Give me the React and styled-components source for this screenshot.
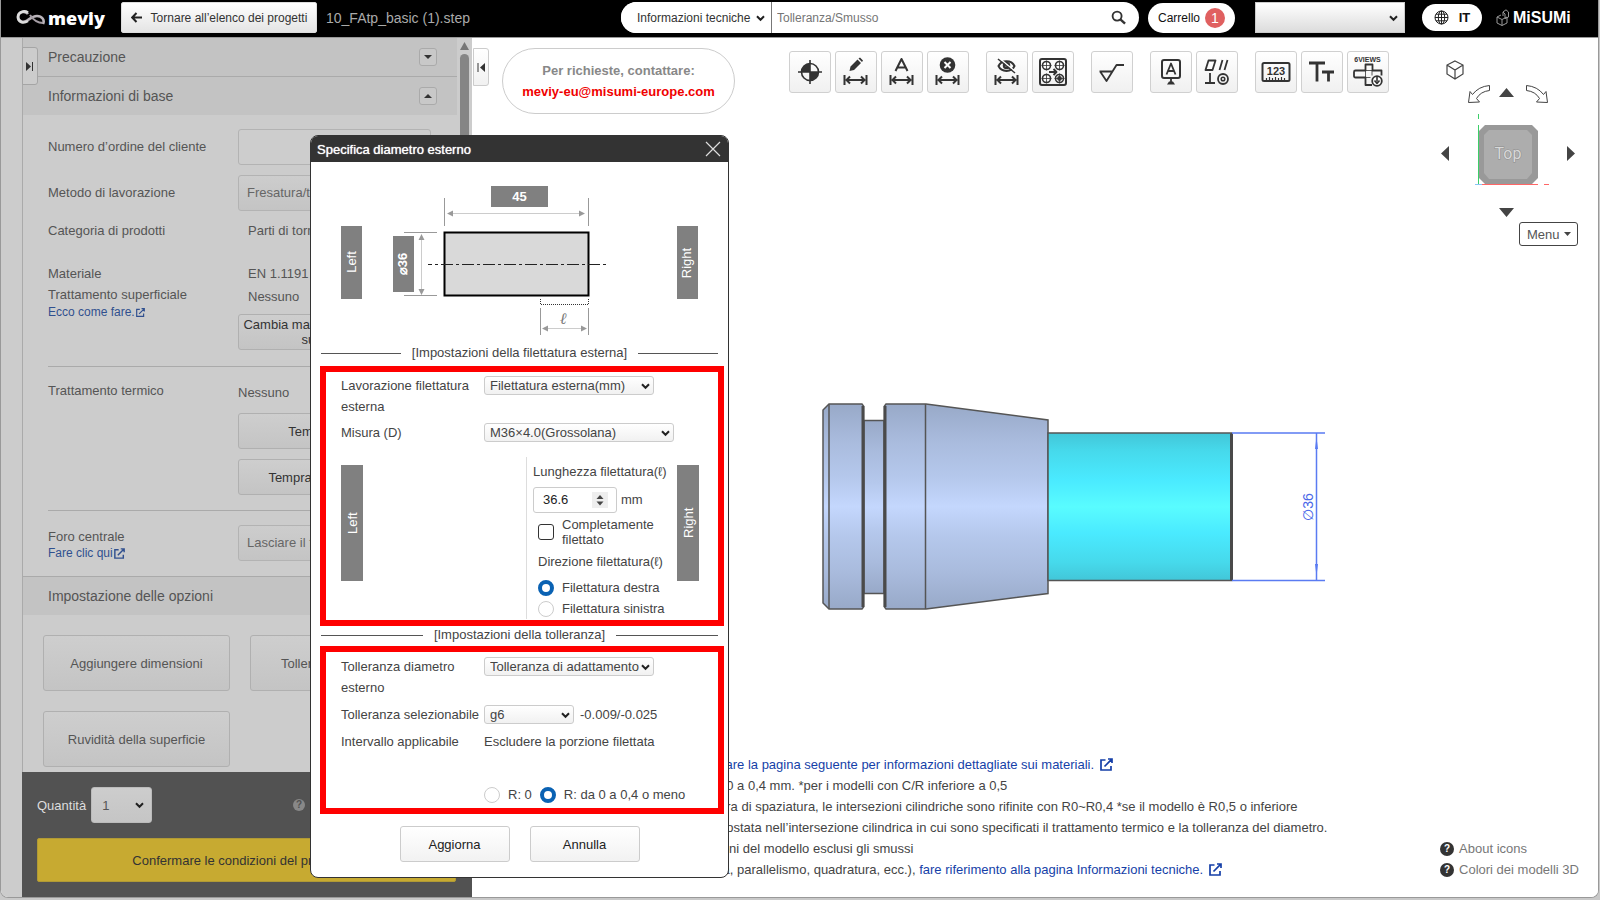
import React from 'react';
import styled, { createGlobalStyle, css } from 'styled-components';

const Global = createGlobalStyle`
  * { box-sizing: border-box; }
  body {
    margin: 0;
    background: #c9c9c9;
    color: #444;
    font-family: "Liberation Sans", Arial, sans-serif;
    font-size: 13px;
    overflow: hidden;
  }
  button, input, select { font: inherit; color: inherit; margin: 0; }
  a { text-decoration: none; }
`;

/* ---------- frame ---------- */

const Shell = styled.div`
  position: relative;
  display: flex;
  flex-direction: column;
  height: calc(100vh - 2px);
  margin-right: 1px;
  border: 1px solid #999;
  border-top: 0;
  border-radius: 0 0 8px 8px;
  background: #fff;
  overflow: hidden;
`;

const Header = styled.header`
  display: flex;
  align-items: center;
  flex: none;
  height: 38px;
  padding: 0 27px 2px 15px;
  background: #000;
  border-bottom: 1px solid #999;
  font-size: 12px;
`;

const Brand = styled.a`
  display: flex;
  align-items: center;
  gap: 2px;
  width: 105px;
  color: #fff;
  font: 800 18px/30px "Open Sans", sans-serif;
  svg { flex: none; }
`;

const BackButton = styled.button`
  display: flex;
  align-items: center;
  justify-content: center;
  gap: 9px;
  width: 196px;
  height: 31px;
  padding: 0;
  border: 1px solid #ddd;
  border-radius: 2px;
  background: linear-gradient(#fff, #e4e4e4);
  color: #333;
  white-space: nowrap;
`;

const FileName = styled.span`
  width: 304px;
  padding-left: 9px;
  color: #aaa;
  font-size: 14px;
`;

const Search = styled.form`
  display: flex;
  align-items: center;
  flex: 1;
  height: 31px;
  padding-right: 13px;
  border-radius: 16px;
  background: #fff;
  overflow: hidden;
`;

const SearchInput = styled.input`
  flex: 1;
  min-width: 0;
  height: 31px;
  padding: 0 5px;
  border: 0;
  border-left: 1px solid #777;
  background: none;
  color: #333;
  &::placeholder { color: #757575; }
`;

const IconButton = styled.button`
  display: flex;
  padding: 0;
  border: 0;
  background: none;
`;

const HeaderPill = styled.button`
  display: flex;
  align-items: center;
  justify-content: center;
  gap: ${p => p.$gap}px;
  width: ${p => p.$width}px;
  height: ${p => p.$height}px;
  margin-left: ${p => p.$left}px;
  padding: 0;
  border: 0;
  border-radius: 16px;
  background: #fff;
  color: #111;
  font-size: ${p => (p.$bold ? 13 : 12)}px;
  font-weight: ${p => (p.$bold ? 700 : 400)};
`;

const Badge = styled.span`
  width: 20px;
  height: 20px;
  border-radius: 50%;
  background: #e06060;
  color: #fff;
  font: 14px/20px "Liberation Sans", Arial, sans-serif;
`;

const Misumi = styled.a`
  display: flex;
  align-items: center;
  gap: 4px;
  width: 75px;
  margin-left: 14px;
  color: #fff;
  font: 700 16px/30px "Liberation Sans", sans-serif;
  svg { flex: none; }
`;

/* ---------- select ---------- */

const selectLooks = {
  header: css`border: 0; background: #fff; height: 31px; padding: 0 16px; color: #333;`,
  account: css`border: 1px solid #ccc; background: linear-gradient(#fff, #dcdcdc); height: 31px;`,
  panel: css`border: 1px solid #b3b3b3; border-radius: 3px; background: linear-gradient(#cdcdcd, #c4c4c4); height: 36px; padding: 0 8px; color: #666;`,
  quantity: css`border: 1px solid #bbb; border-radius: 3px; background: linear-gradient(#cdcdcd, #c5c5c5); height: 36px; padding: 0 10px; color: #555;`,
  dialog: css`border: 1px solid #ccc; border-radius: 3px; background: linear-gradient(#fff, #f1f1f1); height: 19px; padding: 0 5px; line-height: 17px; color: #444;`,
};

const SelectWrap = styled.span`
  position: relative;
  display: block;
  flex: none;
  width: ${p => p.$width}px;
  margin-left: ${p => p.$left || 0}px;
  svg {
    position: absolute;
    top: 50%;
    right: ${p => p.$arrow}px;
    margin-top: -3px;
    pointer-events: none;
  }
`;

const SelectField = styled.select`
  display: block;
  width: 100%;
  appearance: none;
  ${p => selectLooks[p.$look]}
`;

function Select({ look, width, left, arrow = 4, options, ...rest }) {
  return (
    <SelectWrap $width={width} $left={left} $arrow={arrow}>
      <SelectField $look={look} {...rest}>
        {options.map(o => <option key={o}>{o}</option>)}
      </SelectField>
      <svg width="9" height="7" viewBox="0 0 9 7" fill="none" stroke="#222" strokeWidth="2">
        <path d="M1 1.2 4.5 4.8 8 1.2" />
      </svg>
    </SelectWrap>
  );
}

/* ---------- left panel ---------- */

const Main = styled.div`
  display: flex;
  flex: 1;
  min-height: 0;
`;

const Rail = styled.div`
  flex: none;
  width: 21px;
  background: #ccc;
`;

const Panel = styled.aside`
  position: relative;
  display: flex;
  flex-direction: column;
  flex: none;
  width: 450px;
  background: #ccc;
`;

const PanelScroll = styled.div`
  display: flex;
  flex: 1;
  min-height: 0;
  overflow: hidden;
  border-left: 1px solid #aaa;
`;

const PanelContent = styled.div`
  flex: 1;
`;

const ScrollTrack = styled.div`
  display: flex;
  flex-direction: column;
  align-items: center;
  gap: 4px;
  width: 16px;
  padding: 4px 0 0;
  svg { flex: none; }
`;

const ScrollThumb = styled.div`
  width: 9px;
  height: 600px;
  border-radius: 5px;
  background: #858585;
`;

const SectionHeader = styled.h2`
  display: flex;
  align-items: center;
  justify-content: space-between;
  height: ${p => (p.$line ? 39 : 38)}px;
  margin: 0;
  padding: 0 20px 0 25px;
  border-top: ${p => (p.$line ? '1px solid #aaa' : '0')};
  background: #c3c3c3;
  color: #555;
  font-size: 14px;
  font-weight: 400;
`;

const Toggle = styled.button`
  display: grid;
  place-items: center;
  width: 18px;
  height: 18px;
  padding: 0;
  border: 1px solid #aaa;
  border-radius: 3px;
  background: #c8c8c8;
`;

const EdgeTab = styled.button`
  position: absolute;
  top: ${p => (p.$dim ? 9 : 10)}px;
  left: ${p => p.$left}px;
  display: grid;
  place-items: center;
  width: 16px;
  height: 38px;
  padding: 0;
  border: 1px solid ${p => (p.$dim ? '#a5a5a5' : '#ccc')};
  border-radius: 0 3px 3px 0;
  background: ${p => (p.$dim ? '#ccc' : 'linear-gradient(#fff, #f1f1f1)')};
`;

const Form = styled.div`
  padding: 14px 25px 15px 25px;
  color: #555;
`;

const Field = styled.div`
  display: grid;
  grid-template-columns: 190px 193px;
  min-height: ${p => p.$height || 20}px;
  margin-bottom: ${p => p.$gap || 0}px;
  align-items: ${p => (p.$middle ? 'center' : 'start')};
  line-height: 20px;
`;

const Stack = styled.div`
  display: flex;
  flex-direction: column;
  gap: ${p => p.$gap || 0}px;
  padding-top: ${p => p.$top || 0}px;
`;

const Indented = styled.span`
  padding-left: 10px;
`;

const Rule = styled.hr`
  width: 100%;
  margin: 0 0 14px;
  border: 0;
  border-top: 1px solid #aaa;
`;

const HelpLink = styled.a`
  display: flex;
  align-items: center;
  gap: 1px;
  color: #30508f;
  font-size: 12px;
  line-height: 12px;
`;

const OrderInput = styled.input`
  width: 100%;
  height: 36px;
  border: 1px solid #b3b3b3;
  border-radius: 3px;
  background: #cdcdcd;
`;

const PanelButton = styled.button`
  width: 100%;
  height: ${p => p.$height || 36}px;
  padding: 0;
  border: 1px solid #b0b0b0;
  border-radius: 3px;
  background: linear-gradient(#cecece, #c4c4c4);
  color: ${p => (p.$soft ? '#555' : '#333')};
  line-height: 15px;
`;

const OptionGrid = styled.div`
  display: grid;
  grid-template-columns: 187px 187px;
  gap: 20px;
  padding: 20px;
`;

const PanelFooter = styled.footer`
  flex: none;
  height: 125px;
  padding: 15px 16px 0 15px;
  background: #525252;
  color: #ddd;
`;

const QuantityRow = styled.div`
  display: flex;
  align-items: center;
  gap: 5px;
  margin-bottom: 15px;
`;

const HelpDot = styled.span`
  width: ${p => p.$size || 12}px;
  height: ${p => p.$size || 12}px;
  margin-left: ${p => p.$left || 0}px;
  border-radius: 50%;
  background: ${p => p.$bg};
  color: ${p => p.$fg};
  font-size: 10px;
  font-weight: 700;
  line-height: ${p => p.$size || 12}px;
  text-align: center;
`;

const Confirm = styled.button`
  width: 100%;
  height: 44px;
  border: 1px solid #b09a35;
  border-radius: 2px;
  background: #c7aa31;
  color: #333;
`;

/* ---------- viewer ---------- */

const Viewer = styled.main`
  position: relative;
  display: flex;
  flex-direction: column;
  flex: 1;
  min-width: 0;
  background: #fff;
`;

const TopRow = styled.div`
  display: flex;
  align-items: flex-start;
  padding: 10px 0 0 30px;
`;

const Contact = styled.address`
  display: flex;
  flex-direction: column;
  align-items: center;
  justify-content: center;
  width: 233px;
  height: 66px;
  border: 1px solid #ccc;
  border-radius: 33px;
  color: #888;
  font-style: normal;
  font-weight: 700;
  line-height: 21px;
  a { color: #f00000; }
`;

const Toolbar = styled.div`
  display: flex;
  gap: 17px;
  margin: 3px 0 0 54px;
`;

const ToolGroup = styled.div`
  display: flex;
  gap: 4px;
`;

const Tool = styled.button`
  width: 42px;
  height: 42px;
  padding: 0;
  border: 1px solid #d0d0d0;
  border-radius: 3px;
  background: linear-gradient(#fff, #f0f0f0);
  svg { display: block; }
`;

const Stage = styled.div`
  flex: 1;
  min-height: 0;
  padding: 289px 0 0 350px;
  svg { display: block; }
`;

const Navigator = styled.div`
  position: absolute;
  top: 19px;
  right: 18px;
  display: flex;
  flex-direction: column;
  align-items: flex-end;
`;

const MenuButton = styled.button`
  display: flex;
  align-items: center;
  justify-content: space-between;
  width: 59px;
  height: 24px;
  margin-right: 2px;
  padding: 0 6px 0 7px;
  border: 1px solid #444;
  border-radius: 3px;
  background: #fff;
  color: #555;
`;

const BottomRow = styled.div`
  display: flex;
  align-items: flex-end;
  justify-content: space-between;
  padding: 0 19px 17px 247px;
  line-height: 21px;
`;

const Notes = styled.ul`
  margin: 0;
  padding: 0;
  list-style: none;
  white-space: nowrap;
  a { color: #153fa8; }
  svg { margin-left: 6px; vertical-align: -2px; }
`;

const Legend = styled.div`
  display: flex;
  flex-direction: column;
  a { display: flex; align-items: center; gap: 5px; color: #777; }
`;

/* ---------- dialog ---------- */

const Dialog = styled.section`
  position: absolute;
  top: 135px;
  left: 309px;
  width: 419px;
  padding-bottom: 15px;
  border: 1px solid #333;
  border-radius: 8px;
  background: #fff;
  overflow: hidden;
`;

const DialogHeader = styled.header`
  display: flex;
  align-items: center;
  justify-content: space-between;
  height: 26px;
  padding: 0 7px 0 6px;
  background: #333;
  color: #fff;
  h1 {
    margin: 0;
    font-size: 13px;
    font-weight: 400;
    text-shadow: 0 0 1px #fff;
  }
`;

const DialogBody = styled.div`
  padding: 0 4px 0 9px;
  line-height: 21px;
`;

const Sketch = styled.svg`
  display: block;
  margin: 22px 0 7px 21px;
`;

const GroupTitle = styled.h2`
  display: flex;
  align-items: center;
  gap: 11px;
  height: 18px;
  margin: 0 6px 2px 1px;
  font-size: 13px;
  font-weight: 400;
  line-height: 18px;
  &::before, &::after { content: ""; flex: 1; border-top: 1px solid #555; }
`;

const RedFrame = styled.div`
  height: ${p => p.$height}px;
  margin-top: ${p => p.$top || 0}px;
  padding: ${p => p.$pad}px 13px 0 15px;
  border: 6px solid #f00;
`;

const Row = styled.div`
  display: grid;
  grid-template-columns: 143px 1fr;
  margin-bottom: ${p => p.$gap || 0}px;
`;

const Inline = styled.div`
  display: flex;
  align-items: center;
  gap: ${p => p.$gap || 6}px;
  height: ${p => p.$height || 21}px;
`;

const ThreadArea = styled.div`
  display: flex;
  margin-top: 14px;
`;

const SideLabel = styled.div`
  display: grid;
  place-items: center;
  flex: none;
  width: 22px;
  height: 116px;
  margin-top: 8px;
  background: #808080;
  color: #fff;
  writing-mode: vertical-rl;
  transform: rotate(180deg);
`;

const ThreadForm = styled.div`
  flex: none;
  width: 151px;
  height: 162px;
  margin-left: 163px;
  padding: 4px 0 0 6px;
  border-left: 1px solid #ddd;
  white-space: nowrap;
`;

const LengthBox = styled.span`
  display: flex;
  align-items: center;
  width: 84px;
  height: 26px;
  padding: 0 8px 0 9px;
  border: 1px solid #ccc;
  border-radius: 3px;
  color: #222;
  input { width: 49px; padding: 0; border: 0; background: none; }
`;

const Spinner = styled.svg`
  background: #eee;
`;

const Choice = styled.label`
  display: flex;
  align-items: center;
  gap: 8px;
  padding-left: ${p => p.$indent || 0}px;
  line-height: ${p => p.$line || 21}px;
`;

const Check = styled.input`
  appearance: none;
  width: 16px;
  height: 16px;
  margin: 0;
  border: 1px solid #333;
  border-radius: 3px;
  background: #fff;
`;

const Radio = styled.input`
  appearance: none;
  flex: none;
  width: 16px;
  height: 16px;
  margin: 0;
  border: 1px solid #ccc;
  border-radius: 50%;
  background: #fff;
  &:checked { border: 4px solid #0a62b3; }
`;

const RadioRow = styled.div`
  display: flex;
  gap: 8px;
  padding: 32px 0 0 143px;
`;

const Actions = styled.div`
  display: flex;
  justify-content: center;
  gap: 20px;
  margin: 12px 5px 0 0;
`;

const ActionButton = styled.button`
  width: 110px;
  height: 36px;
  border: 1px solid #ccc;
  border-radius: 3px;
  background: linear-gradient(#fff, #f2f2f2);
  color: #222;
`;

/* ---------- drawings ---------- */

const ExternalIcon = ({ size = 13, color = '#153fa8' }) => (
  <svg width={size} height={size} viewBox="0 0 13 13" fill="none" stroke={color} strokeWidth="1.7">
    <path d="M5.5 2H1v10h10V8M4.5 8.5 11.8 1.2M8 1h4v4" />
  </svg>
);

const DimArrow = () => (
  <path d="M9.5 24v10M31.5 24v10M11.5 29h18M15 25.5 11.5 29l3.5 3.5M26 25.5l3.5 3.5-3.5 3.5" />
);

const ToolIcon = ({ children }) => (
  <svg width="40" height="40" viewBox="1 1 40 40" fill="none" stroke="#333" strokeWidth="2" strokeLinejoin="round">
    {children}
  </svg>
);

const Hole = ({ x, y, full }) => (
  <g strokeWidth="1.2">
    <circle cx={x} cy={y} r="4" strokeWidth="1.6" />
    <path d={`M${x - 5} ${y}h10M${x} ${y - 5}v10`} strokeWidth="0.8" />
    {full && <circle cx={x} cy={y} r="1.8" fill="#333" />}
  </g>
);

const toolGroups = [
  [
    ['Origine', <>
      <circle cx="21" cy="21" r="8.5" strokeWidth="1.6" />
      <path d="M21 21V12.500A8.500 8.500 0 0 0 12.500 21zM21 21v8.500A8.500 8.500 0 0 0 29.500 21z" fill="#333" stroke="none" />
      <path d="M21 9v24M9 21h24" strokeWidth="1.6" />
    </>],
    ['Modifica quota', <>
      <DimArrow />
      <path d="M14.500 20l1-4.500 7-7 3.500 3.500-7 7zM23.500 7.500l1.500-1 3 3-1 1.500z" fill="#333" stroke="none" />
    </>],
    ['Quota automatica', <><DimArrow /><path d="M14.500 20 20.500 8l6 12M16.500 16.500h8" /></>],
    ['Elimina quota', <>
      <DimArrow />
      <circle cx="20.500" cy="14" r="7.800" fill="#333" stroke="none" />
      <path d="M17.500 11l6 6M23.500 11l-6 6" stroke="#fff" />
    </>],
  ],
  [
    ['Nascondi quote', <>
      <DimArrow />
      <path d="M12.500 15c3-6.500 13-6.500 16 0-3 6.500-13 6.500-16 0z" />
      <circle cx="20.500" cy="14.500" r="2.500" strokeWidth="2.500" />
      <path d="M13 7l17 14" stroke="#fff" strokeWidth="1.500" />
      <path d="M12 8l17 14" strokeWidth="1.500" />
    </>],
    ['Gruppo fori', <>
      <rect x="8" y="8" width="26" height="26" rx="2" />
      <Hole x={14.5} y={14.5} /><Hole x={27.5} y={14.5} /><Hole x={14.5} y={27.5} /><Hole x={27.5} y={27.5} full />
      <path d="M17 21h7M21.500 18l3 3-3 3" strokeWidth="1.800" />
    </>],
  ],
  [['Rugosità', <path key="r" d="M8.500 20.500h13M9.500 21l6 9L25.500 14H33" strokeWidth="1.800" />]],
  [
    ['Riferimento', <>
      <rect x="12" y="9" width="18" height="18" rx="2" />
      <path d="M16.500 23.500 21 12.500l4.500 11M18 20h6M21 27v4" strokeWidth="1.800" />
      <path d="M17 33.500h8l-2-3h-4z" fill="#333" stroke="none" />
    </>],
    ['Tolleranza geometrica', <>
      <path d="M9.500 19 12.500 9.500h7L16.500 19zM23.500 19l3-10M28.500 19l3-10M14 22v10M9 32h10" strokeWidth="1.800" />
      <circle cx="27" cy="28" r="5" strokeWidth="1.800" /><circle cx="27" cy="28" r="1.800" strokeWidth="1.500" />
    </>],
  ],
  [
    ['Misura', <>
      <rect x="7.500" y="12" width="27" height="18" rx="1.500" />
      <path d="M11.500 30v-3M14.500 30v-4M17.500 30v-3M20.500 30v-4M23.500 30v-3M26.500 30v-4M29.500 30v-3" strokeWidth="1.200" />
      <text x="21" y="24" fill="#333" stroke="none" fontSize="11" fontWeight="700" textAnchor="middle">123</text>
    </>],
    ['Testo', <path key="t" d="M8 12h16M16 12v18.500M21 21h12M27.500 21v9.500" strokeWidth="2.800" />],
    ['Sei viste', <>
      <text x="20.500" y="11" fill="#333" stroke="none" fontSize="7" fontWeight="700" textAnchor="middle">6VIEWS</text>
      <path d="M25 34h-6.500v-7.500h-10q-1.500 0-1.500-1.500v-4q0-1.500 1.500-1.500h10v-6h7v6h9v5" strokeWidth="1.800" />
      <path d="M18.500 19.500h7M18.500 26.500h5M18.500 19.500v7M25 19.500v5" strokeWidth="0.800" />
      <circle cx="30" cy="30" r="4.800" fill="#fff" strokeWidth="1.800" />
      <path d="M30 25.500v5M27.500 29.500l2.500 3 2.500-3" strokeWidth="1.600" />
    </>],
  ],
];

const NavDrawing = () => (
  <svg width="140" height="165" viewBox="1440 57 140 165" fill="none" stroke="#444">
    <path d="M1455 61l8 4v9l-8 5-8-5v-9zM1447 65l8 5 8-5M1455 70v9" strokeWidth="1.200" />
    <path d="M1489.500 85.500v5q-9 1-13 8l3 3.500-11 .500 1.500-11 2.500 3q6-8 17-9zM1526.500 85.500v5q9 1 13 8l-3 3.500 11 .500-1.500-11-2.500 3q-6-8-17-9z" />
    <path d="M1499 97l7.500-9 7.500 9zM1499 208l7.500 9 7.500-9zM1449 146l-8 7.500 8 7.500zM1567 146l8 7.500-8 7.500z" fill="#444" stroke="none" />
    <path d="M1485 125h47l6 6v47l-6 6h-47l-6-6v-47z" fill="#999" stroke="none" />
    <path d="M1489 130h38l5 5v38l-5 6h-38l-5-6v-38z" fill="#adadad" stroke="none" />
    <text x="1508" y="159" fill="#d8d8d8" stroke="#8c8c8c" strokeWidth="1" paintOrder="stroke" fontSize="16" fontFamily="Roboto, sans-serif" textAnchor="middle">Top</text>
    <path d="M1478.500 125v59M1478.500 114v5" stroke="#3ccf68" />
    <path d="M1482 184.500h56M1544 184.500h5" stroke="#f66" />
    <path d="M1475 184.500h7" stroke="#8bc4f5" />
  </svg>
);

const Model = () => (
  <svg width="510" height="208" viewBox="822 403 510 208">
    <defs>
      <linearGradient id="steel" x1="0" y1="0" x2="0" y2="1">
        <stop offset="0" stopColor="#98a9c8" /><stop offset=".18" stopColor="#a9bbdd" />
        <stop offset=".36" stopColor="#b5c8ec" /><stop offset=".5" stopColor="#c4d7fd" />
        <stop offset=".64" stopColor="#b5c8ec" /><stop offset=".82" stopColor="#a9bbdd" />
        <stop offset="1" stopColor="#98a9c8" />
      </linearGradient>
      <linearGradient id="thread" x1="0" y1="0" x2="0" y2="1">
        <stop offset="0" stopColor="#42c6d8" /><stop offset=".12" stopColor="#46d9eb" />
        <stop offset=".32" stopColor="#4aeaff" /><stop offset=".5" stopColor="#59fcff" />
        <stop offset=".68" stopColor="#4aeaff" /><stop offset=".88" stopColor="#46d9eb" />
        <stop offset="1" stopColor="#42c6d8" />
      </linearGradient>
    </defs>
    <g stroke="#555" strokeWidth="1.500" fill="url(#steel)">
      <path d="M864 420.500h20v173h-20z" />
      <path d="M829 404h33l1.500 2v201l-1.500 2h-33l-6-6V410z" />
      <path d="M886 404h40l122 16v173.500L926 609h-40l-1.500-2V406z" />
      <path d="M1048 433h183.500v147.500H1048z" fill="url(#thread)" />
      <path d="M829 404v205M925.500 404v205" fill="none" />
      <path d="M863 406v201M885 406v201M1231.500 433.500v147" strokeWidth="3" stroke="#4a4a4a" />
    </g>
    <g stroke="#5a7bf2" strokeWidth="1.500" fill="none">
      <path d="M1232 433h93M1232 580.500h93M1316.500 433v147" />
      <path d="M1315 449l1.500-12 1.500 12zM1315 564l1.500 12 1.500-12z" fill="#5a7bf2" stroke="none" />
    </g>
    <text transform="translate(1313 507) rotate(-90)" fill="#4a68e8" fontSize="14" textAnchor="middle">∅36</text>
  </svg>
);

const DiameterSketch = () => (
  <Sketch width="360" height="153" viewBox="341 184 360 153" fill="none">
    <g fill="#808080">
      <path d="M491 186h57v21h-57zM341 226h21v73h-21zM393 236h21v56h-21zM677 226h21v73h-21z" />
    </g>
    <g fill="#fff" fontSize="13" textAnchor="middle">
      <text x="519.500" y="201" fontWeight="700">45</text>
      <text transform="translate(356 262) rotate(-90)">Left</text>
      <text transform="translate(407 264) rotate(-90)" fontWeight="700">⌀36</text>
      <text transform="translate(691 263) rotate(-90)">Right</text>
    </g>
    <path d="M444.500 198v28M588.500 198v28M404 232.500h33M404 295.500h33M540.500 308v27M588.500 308v27" stroke="#999" />
    <path d="M450 213.500h132M421.500 238v52M545 328.500h39" stroke="#ccc" />
    <path d="M447 213.500l6-3v6zM585 213.500l-6-3v6zM421.500 234l-3 6h6zM421.500 295l-3-6h6zM542 328.500l6-3v6zM587 328.500l-6-3v6z" fill="#999" />
    <path d="M444.500 232.500h144v63h-144z" fill="#d9d9d9" stroke="#000" strokeWidth="2" />
    <path d="M428 264.500h178" stroke="#222" strokeDasharray="12 3 3 3" strokeDashoffset="8" />
    <path d="M540.500 299v5.500h48V299" stroke="#333" strokeDasharray="1 1" />
    <text x="563" y="324" fill="#777" fontSize="16" fontStyle="italic" textAnchor="middle" fontFamily="DejaVu Serif, serif">ℓ</text>
  </Sketch>
);

/* ---------- page ---------- */

function TopBar() {
  return (
    <Header>
      <Brand href="#">
        <svg width="30" height="18" viewBox="0 0 30 18" fill="none">
          <path d="M12 5C9 1 2 3 2 8s6 6 10 3 5-4 9-4c5 0 8 4 6 8" stroke="#b9b3b9" strokeWidth="2.600" />
          <path d="M12 3.500C8 1 2 3 2 8s5 7 10 4" stroke="#ddd" strokeWidth="2.600" />
          <path d="M14 6c4 6 8 8 13 8" stroke="#a59da5" strokeWidth="2" />
        </svg>
        meviy
      </Brand>
      <BackButton type="button">
        <svg width="11" height="11" viewBox="0 0 11 11" fill="none" stroke="#222" strokeWidth="2"><path d="M11 5.500H1.500M5.500 1 1.200 5.500 5.500 10" /></svg>
        Tornare all’elenco dei progetti
      </BackButton>
      <FileName>10_FAtp_basic (1).step</FileName>
      <Search>
        <Select look="header" width={150} arrow={6} aria-label="Ambito" options={['Informazioni tecniche']} />
        <SearchInput aria-label="Cerca" placeholder="Tolleranza/Smusso" />
        <IconButton type="button" aria-label="Cerca">
          <svg width="15" height="15" viewBox="0 0 16 16" fill="none" stroke="#333" strokeWidth="2"><circle cx="6.500" cy="6.500" r="4.800" /><path d="M10 10l5 4.500" strokeWidth="2.600" /></svg>
        </IconButton>
      </Search>
      <HeaderPill type="button" $width={87} $height={30} $left={9} $gap={5}>Carrello <Badge>1</Badge></HeaderPill>
      <Select look="account" width={150} left={20} arrow={7} aria-label="Account" options={['']} />
      <HeaderPill type="button" $width={60} $height={27} $left={17} $gap={10} $bold>
        <svg width="15" height="15" viewBox="0 0 15 15" fill="none" stroke="#222"><circle cx="7.500" cy="7.500" r="6.500" /><ellipse cx="7.500" cy="7.500" rx="3.200" ry="6.500" /><path d="M7.500 1v13M1 7.500h13M2 4.200h11M2 10.800h11" /></svg>
        IT
      </HeaderPill>
      <Misumi href="#">
        <svg width="13" height="18" viewBox="0 0 13 18" fill="none" stroke="#999">
          <path d="M1 8l5 2.500v6L1 14zM6 10.500l5-2.500v6l-5 2.500M1 8l4-2M7 3l3-2.200L12.500 3v5L9 9.500V5zM7 3v4" />
        </svg>
        MiSUMi
      </Misumi>
    </Header>
  );
}

function SidePanel() {
  return (
    <Panel>
      <PanelScroll>
        <PanelContent>
          <SectionHeader>Precauzione
            <Toggle type="button" aria-label="Apri"><svg width="8" height="4"><path d="M0 0h8L4 4z" fill="#333" /></svg></Toggle>
          </SectionHeader>
          <SectionHeader $line>Informazioni di base
            <Toggle type="button" aria-label="Chiudi"><svg width="8" height="4"><path d="M0 4h8L4 0z" fill="#333" /></svg></Toggle>
          </SectionHeader>
          <Form>
            <Field $height={36} $gap={10} $middle>
              <label htmlFor="order">Numero d’ordine del cliente</label>
              <OrderInput id="order" />
            </Field>
            <Field $height={36} $gap={10} $middle>
              <label htmlFor="method">Metodo di lavorazione</label>
              <Select look="panel" width={193} id="method" options={['Fresatura/tornitura']} />
            </Field>
            <Field $gap={23}>
              <span>Categoria di prodotti</span><Indented>Parti di tornitura</Indented>
            </Field>
            <Field $gap={16}>
              <Stack $gap={1}>
                <span>Materiale</span>
                <span>Trattamento superficiale</span>
                <HelpLink href="#">Ecco come fare.<ExternalIcon size={9} color="#30508f" /></HelpLink>
              </Stack>
              <Stack $gap={3}>
                <Indented>EN 1.1191</Indented>
                <Indented>Nessuno</Indented>
                <Stack $top={4}>
                  <PanelButton type="button">Cambia materiale e trattamento superficiale</PanelButton>
                </Stack>
              </Stack>
            </Field>
            <Rule />
            <Field $gap={15}>
              <span>Trattamento termico</span>
              <Stack $gap={10} $top={2}>
                <span>Nessuno</span>
                <PanelButton type="button">Tempra parziale</PanelButton>
                <PanelButton type="button">Tempra e rinvenimento</PanelButton>
              </Stack>
            </Field>
            <Rule />
            <Field>
              <Stack $top={2}>
                <label htmlFor="center">Foro centrale</label>
                <HelpLink href="#">Fare clic qui <ExternalIcon size={11} color="#30508f" /></HelpLink>
              </Stack>
              <Select look="panel" width={193} id="center" options={['Lasciare il foro']} />
            </Field>
          </Form>
          <SectionHeader $line>Impostazione delle opzioni</SectionHeader>
          <OptionGrid>
            <PanelButton type="button" $height={56} $soft>Aggiungere dimensioni</PanelButton>
            <PanelButton type="button" $height={56} $soft>Tolleranza foro/albero</PanelButton>
            <PanelButton type="button" $height={56} $soft>Ruvidità della superficie</PanelButton>
          </OptionGrid>
        </PanelContent>
        <ScrollTrack>
          <svg width="9" height="8"><path d="M0 8 4.500 0 9 8z" fill="#777" /></svg>
          <ScrollThumb />
        </ScrollTrack>
      </PanelScroll>
      <EdgeTab type="button" $left={0} $dim aria-label="Espandi">
        <svg width="8" height="9"><path d="M0 0l5 4.500L0 9z" fill="#333" /><path d="M6.500 0v9" stroke="#333" /></svg>
      </EdgeTab>
      <PanelFooter>
        <QuantityRow>
          <label htmlFor="qty">Quantità</label>
          <Select look="quantity" width={61} arrow={8} id="qty" options={['1']} />
          <HelpDot $left={136} $bg="#888" $fg="#525252">?</HelpDot>
        </QuantityRow>
        <Confirm type="button">Confermare le condizioni del preventivo</Confirm>
      </PanelFooter>
    </Panel>
  );
}

function ModelViewer() {
  return (
    <Viewer>
      <EdgeTab type="button" $left={1} aria-label="Comprimi">
        <svg width="8" height="9"><path d="M8 0 3 4.500 8 9z" fill="#333" /><path d="M1 0v9" stroke="#333" /></svg>
      </EdgeTab>
      <TopRow>
        <Contact>
          <span>Per richieste, contattare:</span>
          <a href="mailto:meviy-eu@misumi-europe.com">meviy-eu@misumi-europe.com</a>
        </Contact>
        <Toolbar>
          {toolGroups.map((group, i) => (
            <ToolGroup key={i}>
              {group.map(([name, icon]) => <Tool key={name} type="button" aria-label={name}><ToolIcon>{icon}</ToolIcon></Tool>)}
            </ToolGroup>
          ))}
        </Toolbar>
      </TopRow>
      <Stage><Model /></Stage>
      <Navigator>
        <NavDrawing />
        <MenuButton type="button">Menu <svg width="7" height="4"><path d="M0 0h7L3.500 4z" fill="#444" /></svg></MenuButton>
      </Navigator>
      <BottomRow>
        <Notes>
          <li><a href="#">ltare la pagina seguente per informazioni dettagliate sui materiali.<ExternalIcon /></a></li>
          <li>10 a 0,4 mm. *per i modelli con C/R inferiore a 0,5</li>
          <li>ura di spaziatura, le intersezioni cilindriche sono rifinite con R0~R0,4 *se il modello è R0,5 o inferiore</li>
          <li>postata nell’intersezione cilindrica in cui sono specificati il trattamento termico e la tolleranza del diametro.</li>
          <li>ioni del modello esclusi gli smussi</li>
          <li>tà, parallelismo, quadratura, ecc.), <a href="#">fare riferimento alla pagina Informazioni tecniche.<ExternalIcon /></a></li>
        </Notes>
        <Legend>
          <a href="#"><HelpDot $size={14} $bg="#333" $fg="#fff">?</HelpDot>About icons</a>
          <a href="#"><HelpDot $size={14} $bg="#333" $fg="#fff">?</HelpDot>Colori dei modelli 3D</a>
        </Legend>
      </BottomRow>
    </Viewer>
  );
}

function DiameterDialog() {
  return (
    <Dialog role="dialog" aria-labelledby="dialog-title">
      <DialogHeader>
        <h1 id="dialog-title">Specifica diametro esterno</h1>
        <IconButton type="button" aria-label="Chiudi">
          <svg width="16" height="16" stroke="#ddd" strokeWidth="1.200"><path d="M1 1l14 14M15 1 1 15" /></svg>
        </IconButton>
      </DialogHeader>
      <DialogBody>
        <DiameterSketch />
        <GroupTitle>[Impostazioni della filettatura esterna]</GroupTitle>
        <RedFrame $height={260} $top={4} $pad={3}>
          <Row $gap={5}>
            <label htmlFor="thread">Lavorazione filettatura esterna</label>
            <Inline><Select look="dialog" width={170} id="thread" options={['Filettatura esterna(mm)']} /></Inline>
          </Row>
          <Row>
            <label htmlFor="size">Misura (D)</label>
            <Inline><Select look="dialog" width={190} id="size" options={['M36×4.0(Grossolana)']} /></Inline>
          </Row>
          <ThreadArea>
            <SideLabel>Left</SideLabel>
            <ThreadForm>
              <label htmlFor="length">Lunghezza filettatura(ℓ)</label>
              <Inline $height={35} $gap={4}>
                <LengthBox>
                  <input id="length" defaultValue="36.6" />
                  <Spinner width="16" height="16"><path d="M4.500 7 8 3l3.500 4zM4.500 9.500h7L8 13.500z" fill="#444" /></Spinner>
                </LengthBox>
                mm
              </Inline>
              <Choice $indent={5} $line={15}><Check type="checkbox" /><span>Completamente<br />filettato</span></Choice>
              <Stack $top={4}>
                <Choice as="span" $indent={5}>Direzione filettatura(ℓ)</Choice>
                <Stack $top={5}>
                  <Choice $indent={5}><Radio type="radio" name="dir" defaultChecked />Filettatura destra</Choice>
                  <Choice $indent={5}><Radio type="radio" name="dir" />Filettatura sinistra</Choice>
                </Stack>
              </Stack>
            </ThreadForm>
            <SideLabel>Right</SideLabel>
          </ThreadArea>
        </RedFrame>
        <GroupTitle>[Impostazioni della tolleranza]</GroupTitle>
        <RedFrame $height={168} $pad={4}>
          <Row $gap={6}>
            <label htmlFor="tol">Tolleranza diametro esterno</label>
            <Inline><Select look="dialog" width={170} id="tol" options={['Tolleranza di adattamento']} /></Inline>
          </Row>
          <Row $gap={6}>
            <label htmlFor="fit">Tolleranza selezionabile</label>
            <Inline><Select look="dialog" width={90} id="fit" options={['g6']} />-0.009/-0.025</Inline>
          </Row>
          <Row><span>Intervallo applicabile</span><span>Escludere la porzione filettata</span></Row>
          <RadioRow>
            <Choice><Radio type="radio" name="r" />R: 0</Choice>
            <Choice><Radio type="radio" name="r" defaultChecked />R: da 0 a 0,4 o meno</Choice>
          </RadioRow>
        </RedFrame>
        <Actions>
          <ActionButton type="button">Aggiorna</ActionButton>
          <ActionButton type="button">Annulla</ActionButton>
        </Actions>
      </DialogBody>
    </Dialog>
  );
}

export default function App() {
  return (
    <>
      <Global />
      <Shell>
        <TopBar />
        <Main>
          <Rail />
          <SidePanel />
          <ModelViewer />
        </Main>
        <DiameterDialog />
      </Shell>
    </>
  );
}
